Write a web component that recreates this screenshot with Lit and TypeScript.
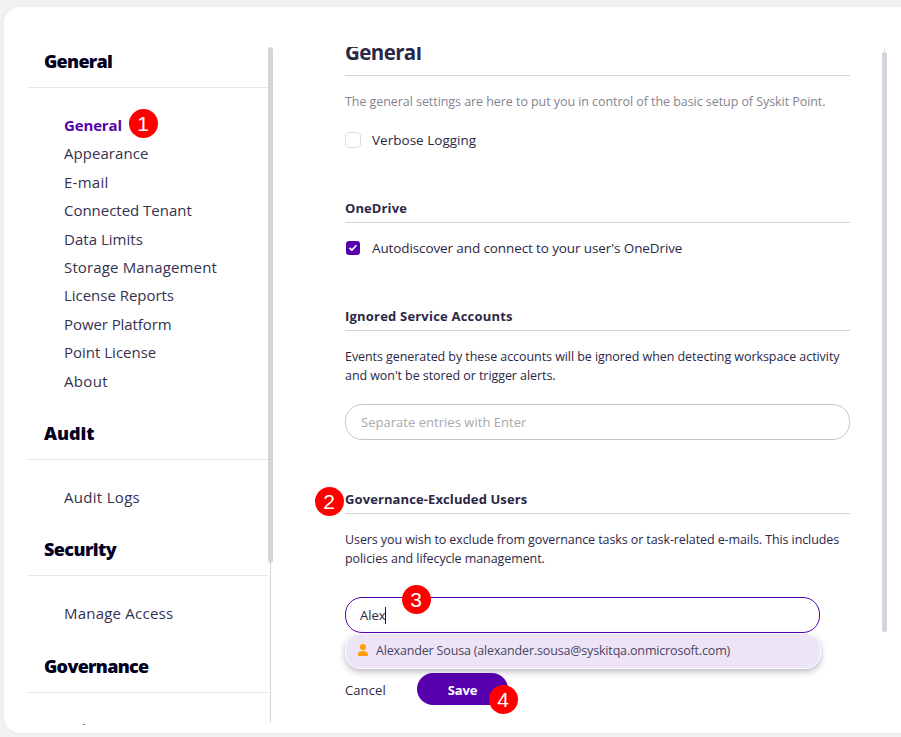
import { LitElement, html, css } from "lit";
import { customElement } from "lit/decorators.js";
import { styleMap } from "lit/directives/style-map.js";

interface Label {
  text: string;
  tracking: number;
}

interface NavGroup {
  title: Label;
  items: Label[];
}

const label = (text: string, tracking = 0): Label => ({ text, tracking });

const NAV: NavGroup[] = [
  {
    title: label("General", -0.7),
    items: [
      label("General", -0.15),
      label("Appearance", 0.05),
      label("E-mail", 0.25),
      label("Connected Tenant", -0.02),
      label("Data Limits", 0.03),
      label("Storage Management", 0.15),
      label("License Reports", -0.03),
      label("Power Platform", -0.08),
      label("Point License", 0),
      label("About", 0.35),
    ],
  },
  { title: label("Audit", -0.1), items: [label("Audit Logs", 0.3)] },
  { title: label("Security", -0.6), items: [label("Manage Access", 0.22)] },
  { title: label("Governance", -0.7), items: [label("Policies", 0)] },
];

const span = (l: Label) =>
  html`<span style=${styleMap({ letterSpacing: `${l.tracking}px` })}>${l.text}</span>`;

@customElement("settings-nav")
export class SettingsNav extends LitElement {
  static styles = css`
    :host {
      display: flex;
      width: 245px;
      height: 678px;
      overflow: hidden;
    }
    .groups {
      width: 240px;
      flex: none;
      padding-top: 2px;
    }
    .title {
      margin: 0;
      padding: 0 0 14px 16px;
      font-size: 18px;
      font-weight: 800;
      line-height: 24px;
      color: #02001f;
      border-bottom: 1px solid #e6e6e9;
    }
    .items {
      list-style: none;
      margin: 0;
      padding: 23px 0 25.9px 36px;
      font-size: 15px;
      line-height: 28.4px;
      color: #35314f;
      white-space: nowrap;
    }
    .items:last-child {
      padding-top: 22px;
    }
    .current {
      font-weight: 700;
      color: #5700ae;
    }
    .scroll {
      width: 5px;
      height: 676px;
      background: linear-gradient(#d5d4dc, #d5d4dc) 2px 0 / 1px 100% no-repeat;
    }
    .thumb {
      height: 516px;
      border-radius: 2.5px;
      background: #d5d4dc;
    }
  `;

  render() {
    return html`
      <nav class="groups">
        ${NAV.map(
          (g, gi) => html`
            <h2 class="title">${span(g.title)}</h2>
            <ul class="items">
              ${g.items.map(
                (it, i) => html`<li class=${gi === 0 && i === 0 ? "current" : ""}>${span(it)}</li>`
              )}
            </ul>
          `
        )}
      </nav>
      <div class="scroll"><div class="thumb"></div></div>
    `;
  }
}

@customElement("app-root")
export class AppRoot extends LitElement {
  static styles = css`
    :host {
      display: block;
      position: relative;
      box-sizing: border-box;
      width: 901px;
      height: 737px;
      padding: 7px 0 4px 4px;
      overflow: hidden;
      background: #f2f2f2;
      font-family: "Open Sans", "Noto Sans", sans-serif;
      color: #2b2847;
    }
    .card {
      box-sizing: border-box;
      width: 930px;
      height: 726px;
      padding: 40px 0 0 24px;
      border-radius: 16px;
      background: #fff;
      box-shadow: 0 0 6px rgba(0, 0, 0, 0.03);
      display: flex;
    }
    main {
      box-sizing: border-box;
      width: 609px;
      height: 686px;
      padding-left: 72px;
      padding-right: 32px;
      overflow: hidden;
    }
    h1,
    h3,
    p {
      margin: 0;
      white-space: nowrap;
    }
    h1 {
      margin-top: -9px;
      font-size: 20.5px;
      font-weight: 700;
      line-height: 29px;
      padding-bottom: 8px;
      border-bottom: 1px solid #d5d4dc;
    }
    h3 {
      margin-top: 48px;
      font-size: 13px;
      font-weight: 700;
      line-height: 20px;
      padding-bottom: 4px;
      border-bottom: 1px solid #d5d4dc;
    }
    .late {
      margin-top: 49px;
    }
    p {
      margin-top: 16px;
      font-size: 12.5px;
      line-height: 19px;
    }
    .hint {
      color: #85838f;
    }
    .check {
      display: flex;
      align-items: center;
      gap: 11px;
      height: 20px;
      margin-top: 15px;
      font-size: 13.5px;
      white-space: nowrap;
    }
    .first {
      margin-top: 19px;
    }
    .box {
      box-sizing: border-box;
      width: 16px;
      height: 16px;
      border: 1px solid #dedde2;
      border-radius: 4px;
    }
    .tick {
      display: block;
      width: 16px;
      height: 16px;
    }
    .field {
      box-sizing: border-box;
      position: relative;
      height: 36px;
      margin-top: 19px;
      padding-left: 15px;
      border: 1px solid #c6c5cd;
      border-radius: 17px;
      display: flex;
      align-items: center;
      font-size: 13px;
      color: #a9a8ae;
    }
    .active {
      width: 475px;
      margin-top: 29px;
      padding-left: 14px;
      border-color: #5700ae;
      color: #2b2847;
    }
    .caret {
      width: 1px;
      height: 17px;
      margin-left: -1px;
      background: #14112e;
    }
    .menu {
      position: absolute;
      box-sizing: border-box;
      top: 35px;
      left: -1px;
      width: 476px;
      height: 36px;
      padding: 0 0 2px 11px;
      border: 1px solid #fff;
      border-radius: 15px;
      background: #ede4f6;
      box-shadow: 0 3px 6px rgba(30, 25, 60, 0.28);
      display: flex;
      align-items: center;
      gap: 7px;
      font-size: 12.5px;
      color: #4a4563;
      white-space: nowrap;
    }
    .actions {
      display: flex;
      align-items: center;
      gap: 31px;
      height: 32px;
      margin-top: 40px;
      font-size: 13px;
    }
    .cancel {
      width: 41px;
      padding-top: 2px;
    }
    .save {
      width: 91px;
      height: 32px;
      border-radius: 16px;
      background: #5700ae;
      color: #fff;
      font-weight: 700;
      line-height: 34px;
      text-align: center;
    }
    .scroll {
      width: 5px;
      height: 583px;
      margin-top: 2px;
      background: linear-gradient(#d5d4dc, #d5d4dc) 2px 0 / 1px 20px no-repeat;
    }
    .thumb {
      height: 580px;
      margin-top: 3px;
      border-radius: 2.5px;
      background: #d5d4dc;
    }
    .badge {
      position: absolute;
      width: 29px;
      height: 29px;
      border-radius: 50%;
      background: #f00;
      color: #fff;
      font: 21px/30px "Liberation Sans", sans-serif;
      text-align: center;
    }
    .b1 {
      left: 128.5px;
      top: 109.3px;
    }
    .b2 {
      left: 314.5px;
      top: 487.3px;
    }
    .b3 {
      left: 401.5px;
      top: 585.3px;
    }
    .b4 {
      left: 488.5px;
      top: 685.3px;
    }
  `;

  render() {
    return html`
      <div class="card">
        <settings-nav></settings-nav>
        <main>
          <h1>${span(label("General", -0.6))}</h1>
          <p class="hint">
            ${span(label("The general settings are here to put you in control of the basic setup of Syskit Point.", -0.062))}
          </p>
          <div class="check first">
            <span class="box"></span>${span(label("Verbose Logging", 0.02))}
          </div>

          <h3>${span(label("OneDrive", 0.1))}</h3>
          <div class="check">
            <svg class="tick" viewBox="0 0 16 16">
              <rect x="1" y="1" width="14" height="14" rx="3" fill="#5700ae" />
              <path d="M4.500 7.800l2.400 2.300 4.600-4.800" fill="none" stroke="#fff" stroke-width="1.600" />
            </svg>
            ${span(label("Autodiscover and connect to your user's OneDrive", -0.11))}
          </div>

          <h3>${span(label("Ignored Service Accounts", 0.2))}</h3>
          <p>
            ${span(label("Events generated by these accounts will be ignored when detecting workspace activity", -0.065))}<br />
            ${span(label("and won't be stored or trigger alerts.", -0.07))}
          </p>
          <div class="field">${span(label("Separate entries with Enter", 0.03))}</div>

          <h3 class="late">${span(label("Governance-Excluded Users", 0.1))}</h3>
          <p>
            ${span(label("Users you wish to exclude from governance tasks or task-related e-mails. This includes", -0.095))}<br />
            ${span(label("policies and lifecycle management.", -0.08))}
          </p>
          <div class="field active">
            ${span(label("Alex", 0))}<span class="caret"></span>
            <div class="menu">
              <svg width="12" height="14" viewBox="0 0 12 14">
                <circle cx="6" cy="4" r="3.100" fill="#ff9f0a" />
                <path d="M1 13v-1.600C1 9.200 2.800 8 6 8s5 1.200 5 3.400V13z" fill="#ff9f0a" />
              </svg>
              ${span(label("Alexander Sousa (alexander.sousa@syskitqa.onmicrosoft.com)", -0.165))}
            </div>
          </div>
          <div class="actions">
            <span class="cancel">${span(label("Cancel", 0.1))}</span>
            <span class="save">${span(label("Save", -0.2))}</span>
          </div>
        </main>
        <div class="scroll"><div class="thumb"></div></div>
      </div>
      <span class="badge b1">1</span>
      <span class="badge b2">2</span>
      <span class="badge b3">3</span>
      <span class="badge b4">4</span>
    `;
  }
}
